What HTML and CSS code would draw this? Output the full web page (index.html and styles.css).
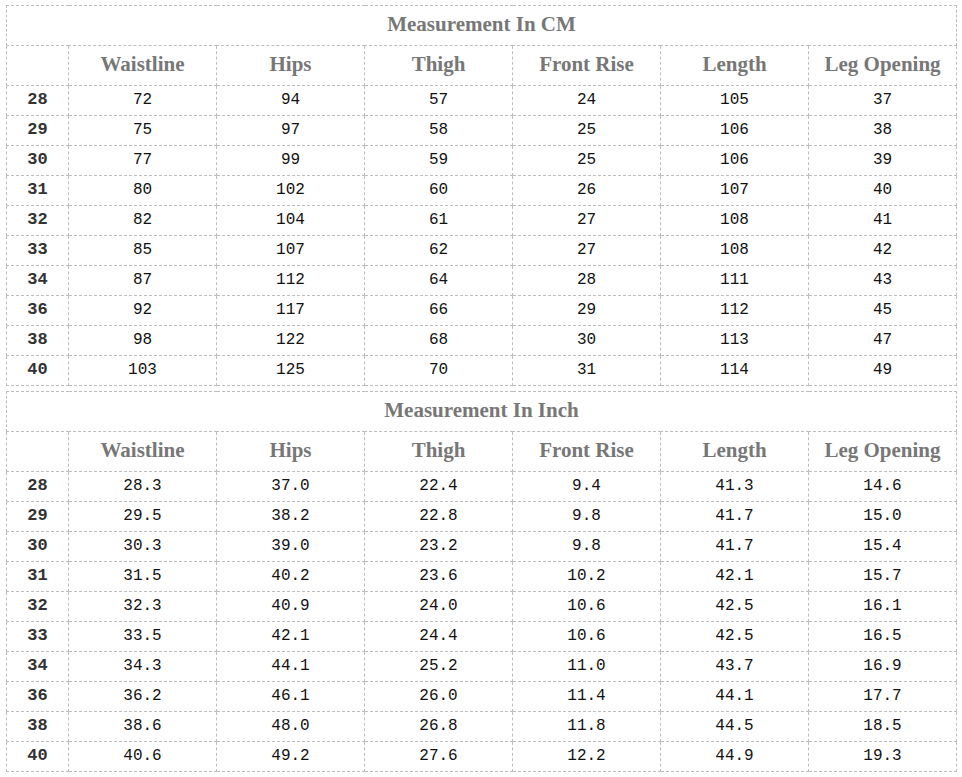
FILE: index.html
```html
<!DOCTYPE html>
<html>
<head>
<meta charset="utf-8">
<link rel="stylesheet" href="styles.css">
</head>
<body>
<table class="size-table">
  <colgroup><col class="c-size"><col class="c-val"><col class="c-val"><col class="c-val"><col class="c-val"><col class="c-val"><col class="c-val"></colgroup>
  <tr class="title-row"><th colspan="7">Measurement In CM</th></tr>
  <tr class="head-row"><th></th><th>Waistline</th><th>Hips</th><th>Thigh</th><th>Front Rise</th><th>Length</th><th>Leg Opening</th></tr>
  <tr><td class="size">28</td><td>72</td><td>94</td><td>57</td><td>24</td><td>105</td><td>37</td></tr>
  <tr><td class="size">29</td><td>75</td><td>97</td><td>58</td><td>25</td><td>106</td><td>38</td></tr>
  <tr><td class="size">30</td><td>77</td><td>99</td><td>59</td><td>25</td><td>106</td><td>39</td></tr>
  <tr><td class="size">31</td><td>80</td><td>102</td><td>60</td><td>26</td><td>107</td><td>40</td></tr>
  <tr><td class="size">32</td><td>82</td><td>104</td><td>61</td><td>27</td><td>108</td><td>41</td></tr>
  <tr><td class="size">33</td><td>85</td><td>107</td><td>62</td><td>27</td><td>108</td><td>42</td></tr>
  <tr><td class="size">34</td><td>87</td><td>112</td><td>64</td><td>28</td><td>111</td><td>43</td></tr>
  <tr><td class="size">36</td><td>92</td><td>117</td><td>66</td><td>29</td><td>112</td><td>45</td></tr>
  <tr><td class="size">38</td><td>98</td><td>122</td><td>68</td><td>30</td><td>113</td><td>47</td></tr>
  <tr><td class="size">40</td><td>103</td><td>125</td><td>70</td><td>31</td><td>114</td><td>49</td></tr>
</table>
<table class="size-table second">
  <colgroup><col class="c-size"><col class="c-val"><col class="c-val"><col class="c-val"><col class="c-val"><col class="c-val"><col class="c-val"></colgroup>
  <tr class="title-row"><th colspan="7">Measurement In Inch</th></tr>
  <tr class="head-row"><th></th><th>Waistline</th><th>Hips</th><th>Thigh</th><th>Front Rise</th><th>Length</th><th>Leg Opening</th></tr>
  <tr><td class="size">28</td><td>28.3</td><td>37.0</td><td>22.4</td><td>9.4</td><td>41.3</td><td>14.6</td></tr>
  <tr><td class="size">29</td><td>29.5</td><td>38.2</td><td>22.8</td><td>9.8</td><td>41.7</td><td>15.0</td></tr>
  <tr><td class="size">30</td><td>30.3</td><td>39.0</td><td>23.2</td><td>9.8</td><td>41.7</td><td>15.4</td></tr>
  <tr><td class="size">31</td><td>31.5</td><td>40.2</td><td>23.6</td><td>10.2</td><td>42.1</td><td>15.7</td></tr>
  <tr><td class="size">32</td><td>32.3</td><td>40.9</td><td>24.0</td><td>10.6</td><td>42.5</td><td>16.1</td></tr>
  <tr><td class="size">33</td><td>33.5</td><td>42.1</td><td>24.4</td><td>10.6</td><td>42.5</td><td>16.5</td></tr>
  <tr><td class="size">34</td><td>34.3</td><td>44.1</td><td>25.2</td><td>11.0</td><td>43.7</td><td>16.9</td></tr>
  <tr><td class="size">36</td><td>36.2</td><td>46.1</td><td>26.0</td><td>11.4</td><td>44.1</td><td>17.7</td></tr>
  <tr><td class="size">38</td><td>38.6</td><td>48.0</td><td>26.8</td><td>11.8</td><td>44.5</td><td>18.5</td></tr>
  <tr><td class="size">40</td><td>40.6</td><td>49.2</td><td>27.6</td><td>12.2</td><td>44.9</td><td>19.3</td></tr>
</table>
</body>
</html>
```
FILE: styles.css
```css
html, body {
  margin: 0;
  background: #fff;
}
body {
  padding: 5px 6px;
}
.size-table {
  border-collapse: collapse;
  table-layout: fixed;
  width: 951px;
  font-family: "Liberation Mono", "Courier New", monospace;
}
.size-table.second {
  margin-top: 5px;
}
.c-size { width: 62px; }
.c-val { width: 148px; }
.size-table th,
.size-table td {
  border: 1px dashed #bdbdbd;
  padding: 0 0 2px 0;
  text-align: center;
  vertical-align: middle;
}
.size-table tr { height: 30px; }
.size-table .title-row,
.size-table .head-row { height: 40px; }
.title-row th,
.head-row th {
  font-family: "Liberation Serif", "Times New Roman", serif;
  font-weight: bold;
  font-size: 21px;
  color: #777;
}
.size-table td {
  font-size: 16px;
  color: #111;
}
.size-table td.size {
  font-size: 17px;
  font-weight: bold;
  color: #333;
}
```
